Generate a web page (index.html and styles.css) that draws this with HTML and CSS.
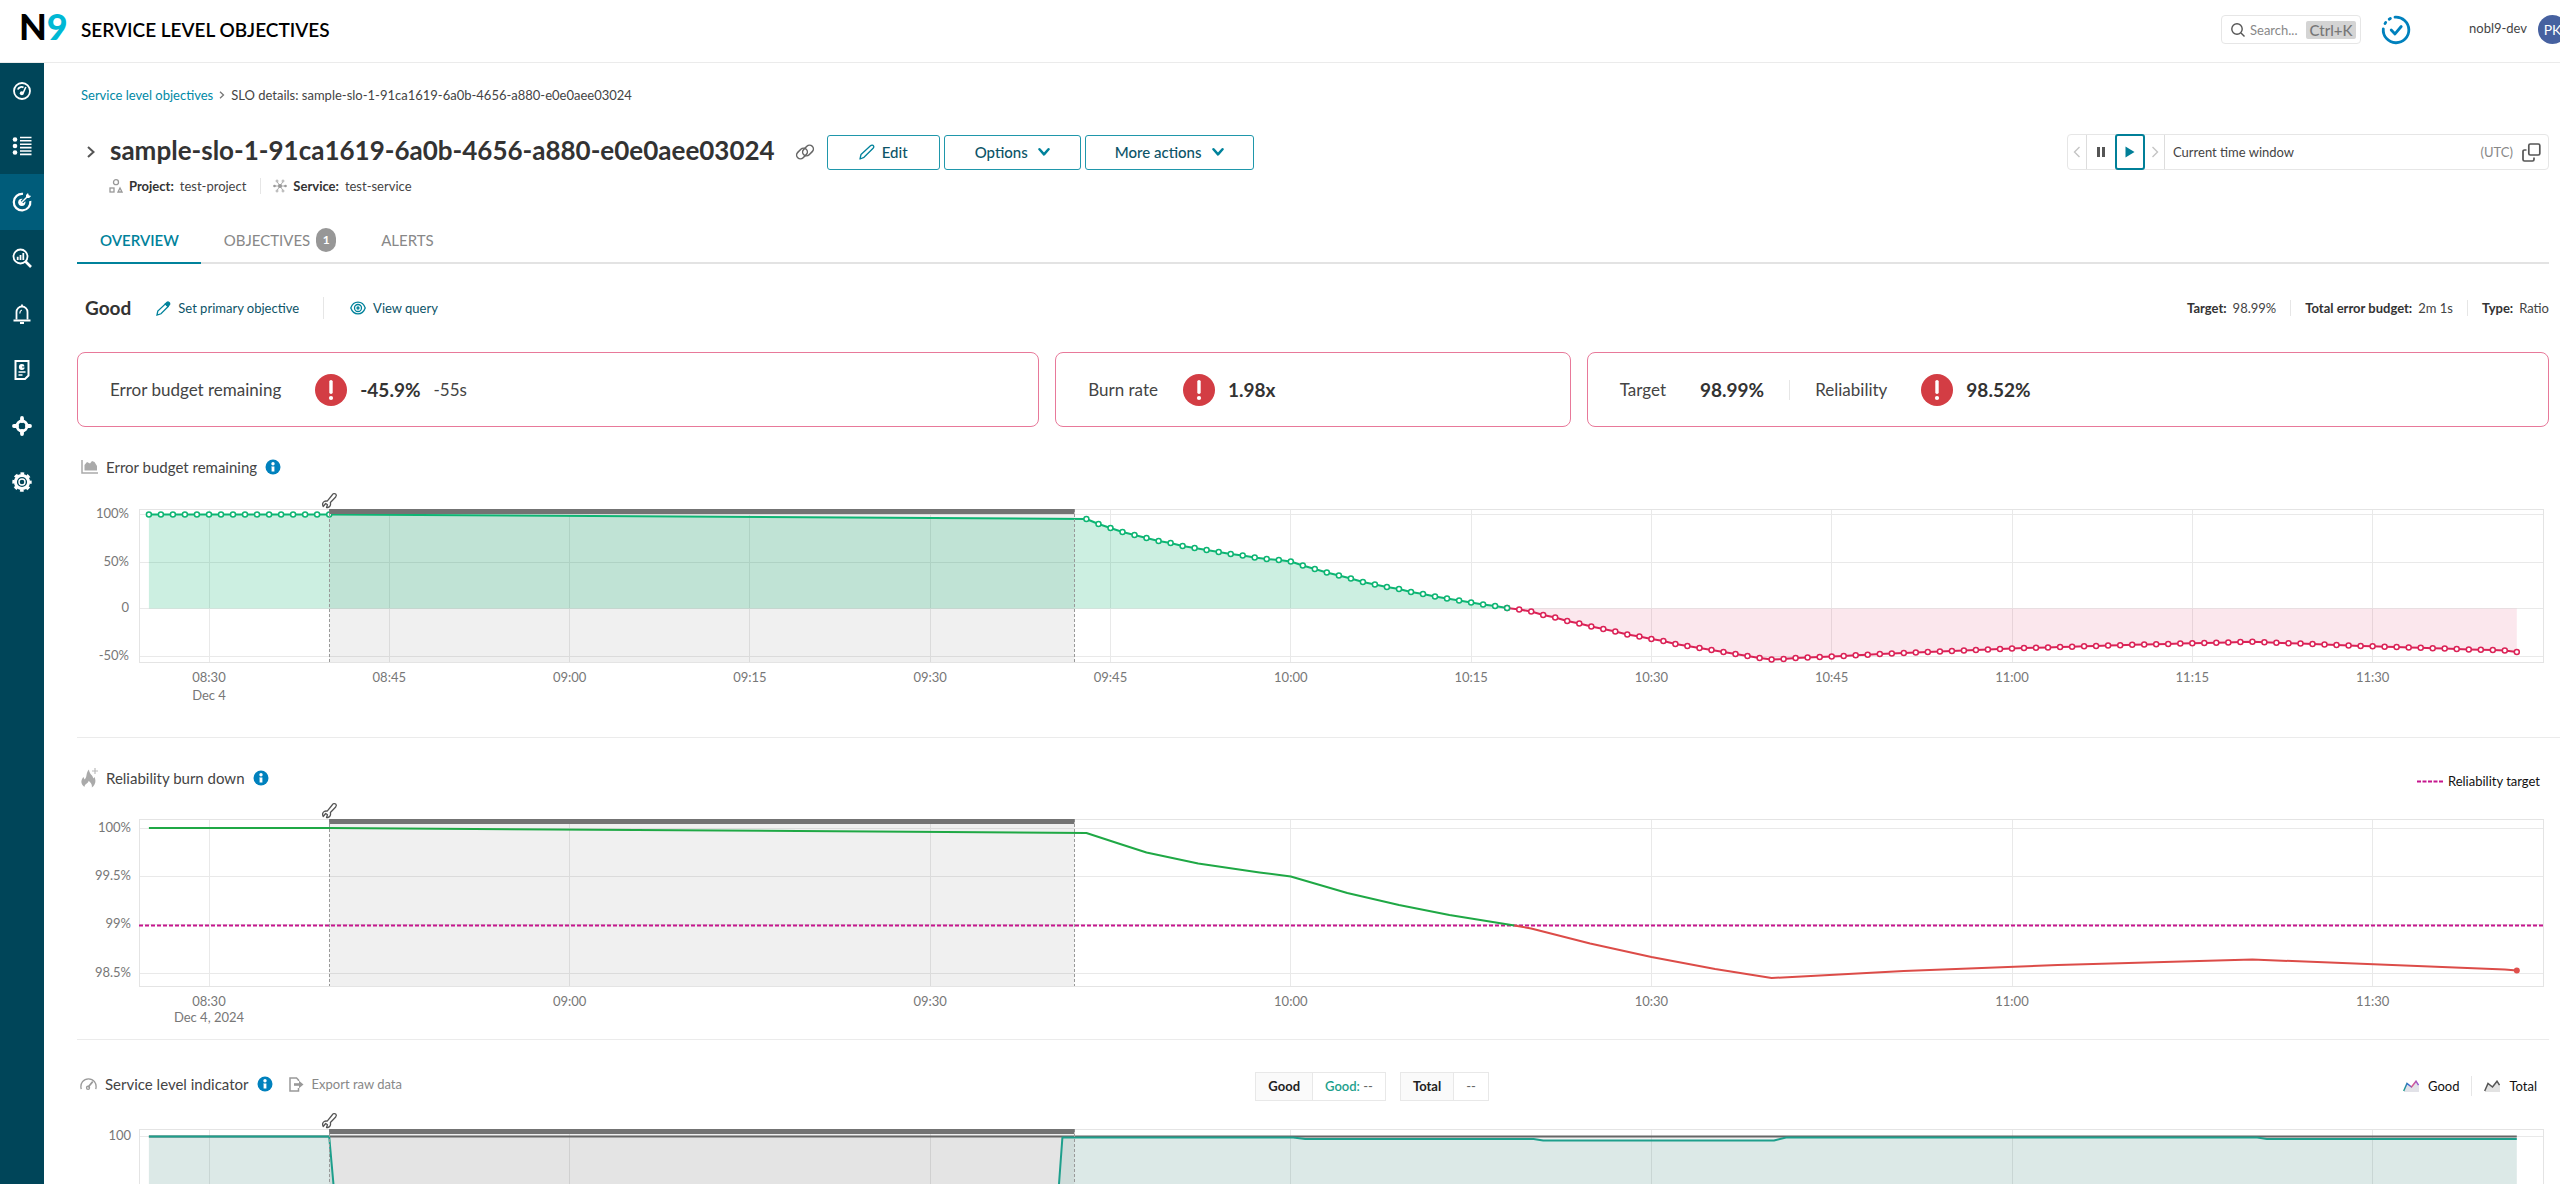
FILE: index.html
```html
<!DOCTYPE html>
<html lang="en">
<head>
<meta charset="utf-8">
<title>Service level objectives</title>
<link rel="stylesheet" href="styles.css">
</head>
<body>
<svg class="sprite" aria-hidden="true">
  <symbol id="i-info" viewBox="0 0 16 16"><circle cx="8" cy="8" r="7.500" fill="#0081bd"/><circle cx="8" cy="4.700" r="1.700" fill="#fff"/><path d="M6.200 7.400h3.200v5.200H6.600V8.600z" fill="#fff"/></symbol>
  <symbol id="i-alert" viewBox="0 0 32 32"><circle cx="16" cy="16" r="16" fill="#d33d44"/><path d="M16 7.600v10.600" stroke="#fff" stroke-width="3.400" stroke-linecap="round"/><circle cx="16" cy="24" r="2.100" fill="#fff"/></symbol>
  <symbol id="i-down" viewBox="0 0 12 10"><path d="M1.500 2.200 6 7.400l4.500-5.200" fill="none" stroke="#00829b" stroke-width="2.500" stroke-linecap="round" stroke-linejoin="round"/></symbol>
</svg>

<header class="topbar">
  <a class="logo" href="#" aria-label="Nobl9">N<span class="logo-nine">9</span></a>
  <span class="topbar-title">SERVICE LEVEL OBJECTIVES</span>
  <label class="search">
    <svg width="14" height="14" viewBox="0 0 14 14" fill="none" stroke="#555" stroke-width="1.400"><circle cx="6" cy="6" r="5.200"/><path d="m10 10 3.500 3.500"/></svg>
    <input class="search-input" type="text" placeholder="Search..." aria-label="Search">
    <kbd class="search-key">Ctrl+K</kbd>
  </label>
  <button class="icon-button check-button" aria-label="Status">
    <svg width="30" height="30" viewBox="0 0 30 30" fill="none" stroke="#0081bd" stroke-width="2.800" stroke-linecap="round" stroke-linejoin="round"><path d="M14 2.200A12.800 12.800 0 1 1 2.300 13.800"/><path d="M4 8.600l.7-1.200M8.200 4.200l1.200-.7"/><path d="m10.200 15 3.800 3.900 6.200-7.400"/></svg>
  </button>
  <span class="org">nobl9-dev</span>
  <span class="avatar">PK</span>
</header>

<div class="shell">
  <nav class="sidebar" aria-label="Main">
    <a class="nav-item" href="#" aria-label="Dashboard"><svg width="20" height="20" viewBox="0 0 20 20" fill="none" stroke="#fff" stroke-width="1.800"><circle cx="10" cy="10" r="8"/><path d="M5.800 8.500C7 5.800 10 5.500 11.500 6.500"/><path d="m13.800 6-2.600 6" stroke-width="1.600"/><circle cx="9.800" cy="12.200" r="2" fill="#fff" stroke="none"/></svg></a>
    <a class="nav-item" href="#" aria-label="Catalog"><svg width="20" height="20" viewBox="0 0 20 20" fill="none" stroke="#fff" stroke-width="1.600"><path d="M8 1.500h11.500M8 4.800h11.500M8 8.200h11.500M8 11.600h11.500M8 15h11.500M8 18.400h11.500"/><circle cx="3" cy="3.500" r="2.300" fill="#fff" stroke="none"/><circle cx="3" cy="10" r="2.300" fill="#fff" stroke="none"/><circle cx="3" cy="16.500" r="2.300" fill="#fff" stroke="none"/></svg></a>
    <a class="nav-item nav-item-active" href="#" aria-label="Service level objectives"><svg width="20" height="20" viewBox="0 0 20 20" fill="none" stroke="#fff" stroke-width="2.200"><path d="M11 1.900A8.300 8.300 0 1 0 18.300 9"/><circle cx="9.800" cy="10.300" r="3.600" fill="#fff" stroke="none"/><path d="m10 10 5-5" stroke="#005c7a" stroke-width="3.600"/><path d="m10 10 4.500-4.500" stroke-width="1.500"/><path d="M14 3l2-2 .8 2.300 2.300.8-2 2H14Z" fill="#fff" stroke="none"/></svg></a>
    <a class="nav-item" href="#" aria-label="Explorer"><svg width="20" height="20" viewBox="0 0 20 20" fill="none" stroke="#fff" stroke-width="1.800"><circle cx="8.500" cy="8.500" r="7"/><path d="m13.500 13.500 5.500 5.500" stroke-width="2.600"/><path d="M5.700 8.800v3.200M8.500 7v5M11.300 5v7"/></svg></a>
    <a class="nav-item" href="#" aria-label="Alerts"><svg width="20" height="20" viewBox="0 0 20 20" fill="none" stroke="#fff" stroke-width="1.800"><path d="M4.500 15.500V8a5.500 5.500 0 0 1 11 0v7.500"/><path d="M1.500 16.500h17" stroke-width="2"/><path d="M7.800 9.500c0-2 .8-3 2-3.500" stroke-width="1.200"/><path d="M8 19h4M10 .500v2"/></svg></a>
    <a class="nav-item" href="#" aria-label="Reports"><svg width="20" height="20" viewBox="0 0 20 20" fill="none" stroke="#fff" stroke-width="2"><path d="M3.500 1h13v14.500L13 19H3.500Z"/><circle cx="9.800" cy="7" r="2.900" fill="#fff" stroke="none"/><path d="M6.500 12h7M6.500 15h4" stroke-width="1.400"/><path d="M10 7h3V4" stroke="#004559" stroke-width="1"/></svg></a>
    <a class="nav-item" href="#" aria-label="Integrations"><svg width="20" height="20" viewBox="0 0 20 20" fill="none" stroke="#fff"><circle cx="10" cy="10" r="5" stroke-width="3"/><path d="M10 2v3M10 15v3M2 10h3M15 10h3" stroke-width="3.800" stroke-linecap="round"/></svg></a>
    <a class="nav-item" href="#" aria-label="Settings"><svg width="20" height="20" viewBox="0 0 20 20" fill="none" stroke="#fff"><circle cx="10" cy="10" r="6.600" stroke-width="3"/><circle cx="10" cy="10" r="3" stroke-width="1.400"/><circle cx="10" cy="10" r="8.500" stroke-width="2.400" stroke-dasharray="3.700 2.975" stroke-dashoffset="1.800"/></svg></a>
  </nav>

  <main class="content">
    <nav class="breadcrumb" aria-label="Breadcrumb">
      <a class="breadcrumb-link" href="#">Service level objectives</a>
      <svg width="6" height="8" viewBox="0 0 6 8" fill="none" stroke="#777" stroke-width="1.300"><path d="m1 .7 3.500 3.300L1 7.300"/></svg>
      <span>SLO details: sample-slo-1-91ca1619-6a0b-4656-a880-e0e0aee03024</span>
    </nav>

    <div class="title-row">
      <button class="icon-button" aria-label="Expand details"><svg width="10" height="14" viewBox="0 0 10 14" fill="none" stroke="#555" stroke-width="2"><path d="m2 2 5.500 5L2 12"/></svg></button>
      <h1 class="title">sample-slo-1-91ca1619-6a0b-4656-a880-e0e0aee03024</h1>
      <button class="icon-button link-button" aria-label="Copy link"><svg width="20" height="18" viewBox="0 0 20 18" fill="none" stroke="#666" stroke-width="1.500"><rect x="-6" y="-3.800" width="12" height="7.600" rx="3.800" transform="translate(7 10.500) rotate(-45)"/><rect x="-6" y="-3.800" width="12" height="7.600" rx="3.800" transform="translate(13 7.500) rotate(-45)"/></svg></button>
      <div class="actions">
        <button class="action action-edit"><svg width="16" height="16" viewBox="0 0 16 16" fill="none" stroke="#00829b" stroke-width="1.300" stroke-linejoin="round"><path d="m1 15 1-4.500L11.500 1.700c1-.9 2.500-.7 3 .1.500.8.300 1.700-.4 2.400L5 13.300Z"/></svg>Edit</button>
        <button class="action action-options">Options<svg width="12" height="10"><use href="#i-down"/></svg></button>
        <button class="action action-more">More actions<svg width="12" height="10"><use href="#i-down"/></svg></button>
      </div>
      <div class="window-picker">
        <button class="window-step window-prev" aria-label="Previous"><svg width="8" height="12" viewBox="0 0 8 12" fill="none" stroke="#c4c4c4" stroke-width="1.400"><path d="M6.500 1 1.500 6l5 5"/></svg></button>
        <button class="window-mode" aria-label="Pause"><svg width="8" height="10" viewBox="0 0 8 10" fill="#555"><path d="M0 0h3v10H0zM5 0h3v10H5z"/></svg></button>
        <button class="window-mode window-mode-on" aria-label="Play"><svg width="10" height="12" viewBox="0 0 10 12" fill="#007f98"><path d="M.5.500 9.500 6l-9 5.500z"/></svg></button>
        <button class="window-step window-next" aria-label="Next"><svg width="8" height="12" viewBox="0 0 8 12" fill="none" stroke="#c4c4c4" stroke-width="1.400"><path d="m1.500 1 5 5-5 5"/></svg></button>
        <span class="window-label">Current time window</span>
        <span class="window-zone">(UTC)</span>
        <button class="icon-button window-copy" aria-label="Copy time window"><svg width="19" height="19" viewBox="0 0 19 19" fill="none" stroke="#555" stroke-width="1.700"><rect x="6.800" y="1" width="11" height="11" rx="1.500"/><path d="M4.500 7H2.500C1.600 7 1 7.600 1 8.500v8c0 .9.600 1.500 1.500 1.500h8c.9 0 1.500-.6 1.500-1.500v-2"/></svg></button>
      </div>
    </div>

    <dl class="meta title-meta">
      <div class="meta-item"><svg width="14" height="14" viewBox="0 0 14 14" fill="none" stroke="#999" stroke-width="1.300"><circle cx="7" cy="3.200" r="2.500"/><rect x="1" y="9" width="4" height="4"/><path d="m11 9 2 4H9Z"/></svg><dt>Project:</dt><dd>test-project</dd></div>
      <div class="meta-item"><svg width="14" height="14" viewBox="0 0 14 14" stroke="#999" fill="#999"><path d="M7 7H2M7 7h5M7 7 4 2.500M7 7l3-4.500M7 7l-3 4.500M7 7l3 4.500" stroke-width=".8"/><circle cx="7" cy="7" r="2" stroke="none"/><circle cx="1.500" cy="7" r="1.300" stroke="none"/><circle cx="12.500" cy="7" r="1.300" stroke="none"/><circle cx="4" cy="2" r="1" stroke-width=".8" fill="#fff"/><circle cx="10" cy="2" r="1" stroke-width=".8" fill="#fff"/><circle cx="4" cy="12" r="1" stroke-width=".8" fill="#fff"/><circle cx="10" cy="12" r="1" stroke-width=".8" fill="#fff"/></svg><dt>Service:</dt><dd>test-service</dd></div>
    </dl>

    <nav class="tabs" aria-label="Sections">
      <a class="tab tab-active" href="#">OVERVIEW</a>
      <a class="tab" href="#">OBJECTIVES <span class="badge">1</span></a>
      <a class="tab" href="#">ALERTS</a>
    </nav>

    <div class="objective-row">
      <h2 class="objective-name">Good</h2>
      <button class="text-button primary-button"><svg width="15" height="15" viewBox="0 0 15 15" fill="none" stroke="#00829b" stroke-width="1.300"><path d="m1 14 .8-4L9.500 2.800l2.700 2.700L5 12.800Z"/><path d="m9.300 2.900 1.800-1.700c1.200-.8 3.200.8 2.400 2.400l-1.700 1.800Z" fill="#00829b"/></svg>Set primary objective</button>
      <button class="text-button query-button"><svg width="16" height="14" viewBox="0 0 16 14" fill="none" stroke="#00829b" stroke-width="1.300"><path d="M.8 7C3.500-.8 12.500-.8 15.200 7 12.500 14.800 3.500 14.800.8 7Z"/><circle cx="8" cy="7" r="3.500"/><circle cx="8" cy="7" r="1"/></svg>View query</button>
      <dl class="meta objective-meta">
        <div class="meta-item"><dt>Target:</dt><dd>98.99%</dd></div>
        <div class="meta-item"><dt>Total error budget:</dt><dd>2m 1s</dd></div>
        <div class="meta-item"><dt>Type:</dt><dd>Ratio</dd></div>
      </dl>
    </div>

    <div class="cards">
      <section class="card">
        <span class="card-label">Error budget remaining</span>
        <svg class="card-alert" width="32" height="32"><use href="#i-alert"/></svg>
        <strong class="card-value">-45.9%</strong>
        <span class="card-extra">-55s</span>
      </section>
      <section class="card">
        <span class="card-label">Burn rate</span>
        <svg class="card-alert card-alert-near" width="32" height="32"><use href="#i-alert"/></svg>
        <strong class="card-value">1.98x</strong>
      </section>
      <section class="card">
        <span class="card-label">Target</span>
        <strong class="card-value card-target">98.99%</strong>
        <span class="card-label card-split">Reliability</span>
        <svg class="card-alert" width="32" height="32"><use href="#i-alert"/></svg>
        <strong class="card-value">98.52%</strong>
      </section>
    </div>

    <section class="panel">
      <div class="panel-head">
        <svg class="panel-icon" width="17" height="14" viewBox="0 0 17 14"><path d="M1 0v13h16" fill="none" stroke="#aaa" stroke-width="1.500"/><path d="M3.500 10.500V5L6 2l3 1.500L11 1l2.500 1L16 6v4.500Z" fill="#aaa"/></svg>
        <h3 class="panel-title">Error budget remaining</h3>
        <svg width="16" height="16"><use href="#i-info"/></svg>
      </div>
      <svg class="chart chart-budget" id="chart-budget" role="img" aria-label="Error budget remaining"></svg>
    </section>

    <section class="panel panel-wide">
      <div class="panel-head">
        <svg class="panel-icon" width="17" height="20" viewBox="0 0 17 20"><path d="M3.500 19C-1 16 0 11.500 2.500 9l1 2.500C6.500 9 4.500 5 8 1.500c0 4.500 4 5.500 4.200 9l1.300-1.500c1.800 4 1 8-2.700 10.500.6-3-1-5-3.200-6.800C7.500 15.500 3.500 15.500 3.500 19Z" fill="#aaa"/><path d="M14 0v6M11 3h6" stroke="#bbb" stroke-width="1.200"/></svg>
        <h3 class="panel-title">Reliability burn down</h3>
        <svg width="16" height="16"><use href="#i-info"/></svg>
        <span class="legend legend-target"><svg width="26" height="3" viewBox="0 0 26 3"><path d="M0 1.500h26" stroke="#c6168d" stroke-width="2" stroke-dasharray="4 1.500"/></svg>Reliability target</span>
      </div>
      <svg class="chart chart-reliability" id="chart-reliability" role="img" aria-label="Reliability burn down"></svg>
    </section>

    <section class="panel">
      <div class="panel-head indicator-head">
        <div class="indicator-left">
          <svg class="panel-icon" width="18" height="14" viewBox="0 0 18 14" fill="none" stroke="#999" stroke-width="1.400"><path d="M1.300 12.500C-.3 6 4 1.500 9 1.500s9.300 4.500 7.700 11"/><path d="m13.500 4.500-5 6" stroke-width="1.800"/><circle cx="8.500" cy="11" r="1.600"/></svg>
          <h3 class="panel-title">Service level indicator</h3>
          <svg width="16" height="16"><use href="#i-info"/></svg>
          <button class="export-button"><svg width="15" height="15" viewBox="0 0 15 15" fill="none" stroke="#999" stroke-width="1.500"><path d="M9.500 4V3L7.500 1H1v13h8.500v-3"/><path d="M5 7.500h6" stroke-width="2.600"/><path d="M10 3.800 14.500 7.500 10 11.200z" fill="#999" stroke="none"/></svg>Export raw data</button>
        </div>
        <div class="readouts">
          <div class="readout"><span class="readout-name">Good</span><span class="readout-value"><span class="readout-good">Good:</span> --</span></div>
          <div class="readout"><span class="readout-name">Total</span><span class="readout-value">--</span></div>
        </div>
        <div class="series-legend">
          <span class="legend"><svg width="16" height="12" viewBox="0 0 16 12"><defs><linearGradient id="good-line"><stop offset="0" stop-color="#1d9f8c"/><stop offset=".35" stop-color="#3a66d8"/><stop offset=".6" stop-color="#e0558a"/><stop offset="1" stop-color="#8c5ad8"/></linearGradient></defs><path d="M1 11 4 3l5 4 4-6 3 5v6H1Z" fill="#e2e2e8"/><path d="M.7 11 4 3.500 8.500 7 13 1.200l2.500 4" fill="none" stroke="url(#good-line)" stroke-width="1.500"/></svg>Good</span>
          <span class="legend legend-split"><svg width="16" height="12" viewBox="0 0 16 12"><path d="M1 11 4 3l5 4 4-6 3 5v6H1Z" fill="#e2e2e2"/><path d="M.7 11 4 3.500 8.500 7 13 1.200l2.500 4" fill="none" stroke="#555" stroke-width="1.500"/></svg>Total</span>
        </div>
      </div>
      <svg class="chart chart-indicator" id="chart-indicator" role="img" aria-label="Service level indicator"></svg>
    </section>
  </main>
</div>
<script src="charts.js"></script>
</body>
</html>
```

FILE: styles.css
```css
*, *::before, *::after { box-sizing: border-box; }

body {
  margin: 0;
  height: 100vh;
  display: flex;
  flex-direction: column;
  overflow: hidden;
  background: #fff;
  color: #444;
  font-family: Lato, "Open Sans", sans-serif;
  font-size: 13px;
  line-height: 20px;
}

button { font: inherit; color: inherit; background: none; border: 0; padding: 0; cursor: pointer; }
a { text-decoration: none; color: inherit; }
h1, h2, h3, dl, dd { margin: 0; }
svg { flex: none; }
.sprite { position: absolute; width: 0; height: 0; }
.icon-button { display: flex; }

/* Top bar */
.topbar {
  flex: none;
  height: 63px;
  display: flex;
  align-items: flex-start;
  padding: 15px 0 0 19px;
  border-bottom: 1px solid #ebebeb;
  overflow: hidden;
}
.logo { width: 62px; font-size: 36px; font-weight: 900; line-height: 22px; color: #000; }
.logo-nine { color: #00b8d4; }
.topbar-title { margin-right: auto; font-size: 19px; font-weight: 600; line-height: 30px; color: #000; }
.search {
  display: flex;
  align-items: center;
  width: 140px;
  height: 29px;
  padding: 0 4px 0 9px;
  border: 1px solid #e6e6e6;
  border-radius: 4px;
}
.search-input { flex: 1; min-width: 0; padding: 0 0 0 5px; border: 0; font: inherit; outline: 0; background: none; }
.search-input::placeholder { color: #888; }
.search-key { width: 50px; border-radius: 2px; background: #d4d4d4; color: #777; font: 500 15px/18px Lato, "Open Sans", sans-serif; text-align: center; }
.check-button { margin-left: 20px; }
.org { margin-left: 58px; width: 69px; line-height: 27px; }
.avatar {
  flex: none;
  width: 29px;
  height: 29px;
  margin-right: -7px;
  border-radius: 50%;
  background: #4661a0;
  color: #fff;
  line-height: 29px;
  text-align: center;
  font-size: 14px;
}

/* Shell */
.shell { flex: 1; min-height: 0; display: flex; }
.sidebar { flex: none; width: 44px; background: #004559; }
.nav-item { display: flex; align-items: center; justify-content: center; height: 56px; }
.nav-item:first-child { height: 55px; }
.nav-item-active { background: #005c7a; }
.content { flex: 1; min-width: 0; padding: 22px 11px 0 33px; overflow: hidden; }

.breadcrumb { display: flex; align-items: center; gap: 6px; padding-left: 4px; }
.breadcrumb-link { color: #0089a5; }

.title-row { display: flex; align-items: center; height: 36px; margin-top: 29px; padding-left: 9px; }
.title { margin-left: 14px; padding-bottom: 4px; font-size: 26px; font-weight: 700; line-height: 32px; color: #333; }
.link-button { margin-left: 20px; }
.actions { display: flex; gap: 4px; margin-left: 12px; }
.action {
  display: flex;
  align-items: center;
  justify-content: center;
  gap: 10px;
  height: 35px;
  border: 1px solid #1f97ab;
  border-radius: 3px;
  color: #0c5468;
  font-size: 15px;
  font-weight: 500;
}
.action-edit { width: 113px; gap: 7px; }
.action-options { width: 137px; }
.action-more { width: 169px; }

.window-picker {
  display: flex;
  align-items: center;
  width: 482px;
  height: 36px;
  margin-left: auto;
  border: 1px solid #e6e6e6;
  border-radius: 4px;
}
.window-step, .window-mode { display: flex; align-items: center; justify-content: center; height: 34px; }
.window-step { width: 19px; }
.window-prev, .window-next { border-right: 1px solid #ddd; }
.window-next { width: 20px; }
.window-mode { width: 28px; }
.window-mode-on { width: 30px; height: 36px; border: 2px solid #007f98; border-radius: 3px; }
.window-label { margin: 0 auto 0 8px; }
.window-zone { color: #888; }
.window-copy { margin: 0 7px 0 9px; }

.meta { display: flex; line-height: 16px; }
.meta-item { display: flex; align-items: center; gap: 6px; }
.meta-item dt { color: #333; font-weight: 700; }
.meta-item + .meta-item { margin-left: 14px; padding-left: 14px; border-left: 1px solid #e6e6e6; }
.title-meta { margin-top: 8px; padding-left: 32px; }
.title-meta .meta-item + .meta-item { padding-left: 12px; }

.tabs { display: flex; margin-top: 24px; border-bottom: 2px solid #e3e3e3; }
.tab { display: flex; align-items: center; gap: 6px; height: 44px; padding: 0 22px 0 23px; color: #888; font-size: 15px; }
.tab-active { height: 46px; margin-bottom: -2px; border-bottom: 2px solid #00829b; color: #00829b; font-weight: 600; }
.badge { width: 20px; height: 24px; border-radius: 10px; background: #979797; color: #fff; font-size: 12px; line-height: 24px; font-weight: 700; text-align: center; }

.objective-row { display: flex; align-items: center; height: 32px; margin-top: 28px; padding-left: 8px; }
.objective-name { font-size: 19px; font-weight: 700; line-height: 24px; color: #333; }
.text-button { display: flex; align-items: center; gap: 7px; color: #0c5468; }
.primary-button { margin-left: 25px; }
.query-button { height: 22px; margin-left: 24px; padding-left: 26px; border-left: 1px solid #e6e6e6; }
.objective-meta { margin-left: auto; }

.cards { display: grid; grid-template-columns: 28fr 15fr 28fr; gap: 16px; margin-top: 28px; }
.card { display: flex; align-items: center; height: 75px; padding: 0 32px; border: 1px solid #e8799a; border-radius: 8px; font-size: 17px; }
.card-alert { margin: 0 13px 0 34px; }
.card-alert-near { margin-left: 25px; }
.card-value { color: #333; font-size: 19px; font-weight: 700; }
.card-extra { margin-left: 13px; }
.card-target { margin: 0 25px 0 34px; }
.card-split { padding-left: 25px; border-left: 1px solid #e6e6e6; }

/* Chart panels */
.panel { padding-top: 31px; }
.panel + .panel { border-top: 1px solid #ebebeb; }
.panel-wide { margin-right: -11px; padding-right: 11px; }
.panel-head { display: flex; align-items: center; gap: 8px; height: 20px; padding: 0 0 2px 4px; }
.panel-icon { width: 17px; }
.panel-title { font-size: 15px; font-weight: 400; line-height: 20px; color: #444; }
.chart { display: block; width: 100%; font-size: 13px; }
.chart-budget { height: 259px; }
.chart-reliability { height: 250px; }
.chart-indicator { height: 250px; }
.legend { display: flex; align-items: center; gap: 9px; color: #111; }
.legend-target { gap: 5px; margin: 6px 9px 0 auto; }
.indicator-head { display: grid; grid-template-columns: 51fr 10fr 46fr; gap: 0; align-items: center; height: 30px; padding: 0 0 0 3px; }
.indicator-left { display: flex; align-items: center; gap: 8px; padding-bottom: 4px; }
.export-button { display: flex; align-items: center; gap: 8px; margin-left: 8px; color: #888; }
.readouts { display: flex; gap: 14px; white-space: nowrap; }
.readout { flex: none; display: flex; height: 29px; border: 1px solid #e8e8e8; line-height: 27px; }
.readout-name { padding: 0 12px; background: #fafafa; border-right: 1px solid #e8e8e8; color: #222; font-weight: 700; }
.readout-value { padding: 0 12px; color: #666; }
.readout-good { color: #1d9f8c; font-weight: 600; }
.series-legend { display: flex; justify-content: flex-end; padding-right: 12px; }
.legend-split { margin-left: 12px; padding-left: 12px; border-left: 1px solid #e6e6e6; }

/* Chart parts */
.frame { fill: none; stroke: #e4e4e4; }
.grid { stroke: #e9e9e9; }
.axis-text { fill: #777; }
.shade { fill: rgba(0, 0, 0, .06); }
.shade-edge { stroke: #999; stroke-dasharray: 3 2; }
.shade-bar { fill: #737373; }
.wrench { fill: #fff; stroke: #555; stroke-width: 1.300; stroke-linejoin: round; }
.fill-good { fill: rgba(0, 177, 106, .2); }
.fill-bad { fill: rgba(219, 20, 80, .1); }
.fill-total { fill: rgba(90, 90, 90, .08); }
.fill-series { fill: rgba(29, 159, 140, .1); }
.line { fill: none; stroke-width: 2; stroke-linejoin: round; }
.line-good { stroke: #0db573; }
.line-bad { stroke: #db2357; }
.line-above { stroke: #1fa845; }
.line-below { stroke: #dc4c48; }
.line-total { stroke: #666; }
.line-series { stroke: #1d9f8c; }
.line-target { stroke: #c6168d; stroke-dasharray: 4 2; }
.dot { fill: #fff; stroke-width: 1.500; }
.dot-end { fill: #e0504c; }
```

FILE: charts.js
```js
// Times are minutes after 08:00; every chart shows the same window.
const START = 24.18, END = 224.26, SHADE = [40, 102];
const LEFT = 62, RIGHT = 5;

function clock(t) {
  const h = 8 + Math.floor(t / 60), m = t % 60;
  return String(h).padStart(2, '0') + ':' + String(m).padStart(2, '0');
}

function draw(id, o) {
  const svg = document.getElementById(id);
  const w = svg.clientWidth - LEFT - RIGHT;
  const x = t => +(LEFT + (t - START) / (END - START) * w).toFixed(1);
  const path = pts => pts.map((p, i) => (i ? 'L' : 'M') + x(p[0]) + ' ' + p[1]).join('');
  const snap = v => Math.floor(v) + .5;
  let s = '';
  o.ticksY.forEach(([y, label]) => {
    s += `<path class="grid" d="M${LEFT} ${y}.5h${w}"/><text class="axis-text" x="${o.labelX}" y="${y + 4}" text-anchor="end">${label}</text>`;
  });
  for (let t = 30; t < END; t += o.step) {
    s += `<path class="grid" d="M${snap(x(t))} ${o.top}V${o.bottom}"/>`;
    if (o.times) s += `<text class="axis-text" x="${x(t)}" y="${o.bottom + 20}" text-anchor="middle">${clock(t)}</text>`;
  }
  if (o.date) s += `<text class="axis-text" x="${x(30)}" y="${o.dateY}" text-anchor="middle">${o.date}</text>`;
  s += `<rect class="frame" x="${LEFT}.5" y="${o.top}.5" width="${w - 1}" height="${o.bottom - o.top}"/>`;
  const a = x(SHADE[0]), b = x(SHADE[1]);
  s += `<rect class="shade" x="${a}" y="${o.top}" width="${b - a}" height="${o.bottom - o.top}"/>`;
  s += o.series(x, path);
  s += `<path class="shade-edge" d="M${snap(a)} ${o.top}V${o.bottom}M${snap(b)} ${o.top}V${o.bottom}"/>`;
  s += `<rect class="shade-bar" x="${a}" y="${o.top}" width="${b - a}" height="5"/>`;
  s += `<path class="wrench" transform="translate(${a - 7} ${o.top - 16})" d="M1 13.500c-1-2-.5-4 1-5 1-.6 2-.6 3-.4L10 2c.8-1.500 2.500-1.700 3.500-1 .9.800.7 2 0 3L8.200 9.500c.6 2.200-.2 4.500-2.700 5H4.300l1-2.700-1.800-1.300Z"/>`;
  svg.innerHTML = s;
}

const decline = [[103, 41], [104, 46], [105, 50], [106, 54], [107, 57], [108, 60], [109, 63], [110, 65], [111, 68],
  [112, 70], [113, 72], [114, 74], [115, 76], [116, 77.5], [117, 79.5], [118, 81], [119, 82], [120, 83.5], [121, 87.5],
  [122, 91], [123, 94.5], [124, 97.5], [125, 100.5], [126, 104], [127, 106.5], [128, 109], [129, 111], [130, 114], [131, 116],
  [132, 118.5], [133, 120.5], [134, 122.5], [135, 124.5], [136, 126.5], [137, 128], [138, 130]];
const negative = [[138, 130], [139, 131.5], [140, 133.5], [141, 137], [142, 139.5], [143, 143], [144, 145.5], [145, 148.5], [146, 151],
  [147, 153.5], [148, 156.5], [149, 158.5], [150, 161], [151, 163], [152, 166], [153, 168], [154, 170], [155, 172], [156, 174],
  [157, 176], [158, 178], [159, 180], [160, 181.5], [161, 181], [162, 180]];
const knots = [[162, 180], [165, 178.5], [170, 175.5], [180, 170.5], [190, 166.8], [200, 163.8], [210, 168.3], [221, 172.5], [222, 174]];
for (let k = 1; k < knots.length; k++) {
  const [t0, y0] = knots[k - 1], [t1, y1] = knots[k];
  for (let t = t0 + 1; t <= t1; t++) negative.push([t, +(y0 + (y1 - y0) * (t - t0) / (t1 - t0)).toFixed(1)]);
}
const full = [];
for (let t = 25; t <= 40; t++) full.push([t, 36.5]);

const reliabilityGood = [[25, 39], [40, 39], [103, 44], [105.8, 55], [108, 63.5], [112.3, 74.5], [117.4, 83.5], [120, 87.5], [124.7, 104],
  [129, 116], [133.2, 126], [138.6, 136.5]];
const reliabilityBad = [[138.6, 136.5], [140, 139.5], [144.9, 154.5], [150, 168], [155.3, 180], [160, 189], [162.5, 187.5], [171, 182],
  [183.8, 176], [200, 170.5], [221, 180.5], [222, 181.5]];
const indicator = [[25, 35.5], [40, 35.5], [41.6, 250], [99.7, 250], [101, 36.5], [120.2, 36.5], [121.2, 38], [140.2, 38], [141, 39.5],
  [160.2, 39.5], [161.2, 36.5], [200.4, 36.5], [201.2, 38], [222, 38]];

function render() {
  draw('chart-budget', {
    top: 31, bottom: 184, step: 15, times: true, date: 'Dec 4', dateY: 222, labelX: 52,
    ticksY: [[36, '100%'], [84, '50%'], [130, '0'], [178, '-50%']],
    series(x, path) {
      const dots = (pts, c) => pts.map(p => `<circle class="dot ${c}" cx="${x(p[0])}" cy="${p[1]}" r="2.5"/>`).join('');
      const good = full.concat(decline);
      return `<path class="fill-good" d="${path(good)}V130.5H${x(25)}Z"/><path class="fill-bad" d="${path(negative)}V130.5H${x(138)}Z"/>` +
        `<path class="line line-good" d="${path(good)}"/><path class="line line-bad" d="${path(negative)}"/>` +
        dots(negative, 'line-bad') + dots(good, 'line-good');
    }
  });
  draw('chart-reliability', {
    top: 30, bottom: 197, step: 30, times: true, date: 'Dec 4, 2024', dateY: 233, labelX: 54,
    ticksY: [[39, '100%'], [87, '99.5%'], [135, '99%'], [184, '98.5%']],
    series(x, path) {
      return `<path class="line line-target" d="M${LEFT} 136.5H${x(END)}"/><path class="line line-above" d="${path(reliabilityGood)}"/>` +
        `<path class="line line-below" d="${path(reliabilityBad)}"/><circle class="dot-end" cx="${x(222)}" cy="181.5" r="3"/>`;
    }
  });
  draw('chart-indicator', {
    top: 28, bottom: 249, step: 30, labelX: 54, ticksY: [[35, '100']],
    series(x, path) {
      return `<path class="fill-total" d="M${x(25)} 35.5H${x(222)}V249H${x(25)}Z"/><path class="fill-series" d="${path(indicator)}V250H${x(25)}Z"/>` +
        `<path class="line line-total" d="M${x(25)} 35.5H${x(222)}"/><path class="line line-series" d="${path(indicator)}"/>`;
    }
  });
}
render();
addEventListener('resize', render);
```
